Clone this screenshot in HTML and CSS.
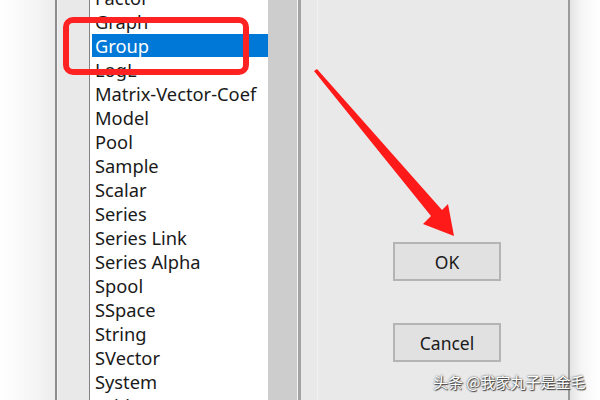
FILE: index.html
```html
<!DOCTYPE html>
<html lang="en">
<head>
    <meta charset="UTF-8">
    <title>Select object type</title>
    <link rel="stylesheet" href="styles.css">
</head>
<body>

<div class="screen">
    <div class="shade-left"></div>

    <div class="dialog">
        <div class="gutter"></div>

        <div class="listbox">
            <div class="list">
                <ul class="items">
                    <li>Factor</li>
                    <li>Graph</li>
                    <li class="selected">Group</li>
                    <li>LogL</li>
                    <li>Matrix-Vector-Coef</li>
                    <li>Model</li>
                    <li>Pool</li>
                    <li>Sample</li>
                    <li>Scalar</li>
                    <li>Series</li>
                    <li>Series Link</li>
                    <li>Series Alpha</li>
                    <li>Spool</li>
                    <li>SSpace</li>
                    <li>String</li>
                    <li>SVector</li>
                    <li>System</li>
                    <li>Table</li>
                </ul>
            </div>
            <div class="scrollbar"></div>
        </div>

        <div class="side">
            <div class="buttons">
                <button class="btn">OK</button>
                <button class="btn">Cancel</button>
            </div>
        </div>
    </div>

    <div class="shade-right"></div>

    <!-- annotation marks drawn on top of the screenshot -->
    <div class="mark-box"></div>
    <svg class="mark-arrow" width="600" height="400" viewBox="0 0 600 400">
        <polygon points="314,71 317,69 442,210 448,204 454,236 423,224 431,216" fill="#ff1a1a"/>
    </svg>

    <div class="watermark">头条 @我家丸子是金毛</div>
</div>

</body>
</html>
```

FILE: styles.css
```css
body {
    margin: 0;
    font-family: "Noto Sans", "Open Sans", sans-serif;
    background-color: #ffffff;
}

.screen {
    position: relative;
    display: flex;
    width: 600px;
    height: 400px;
    overflow: hidden;
}

.shade-left {
    width: 55px;
    background: linear-gradient(to right, #ffffff, #f4f4f4 70%, #ececec);
}

.shade-right {
    flex: 1;
    background: linear-gradient(to right, #e4e4e4, #f6f6f6 40%, #ffffff);
}

.dialog {
    display: flex;
    width: 511px;
    background-color: #e9e9e9;
    border-left: 2px solid #8c8c8c;
    border-right: 2px solid #9a9a9a;
}

.gutter {
    width: 31px;
    border-left: 1px solid #f2f2f2;
}

.listbox {
    display: flex;
    border-left: 1px solid #828282;
    border-right: 3px solid #a3a3a3;
}

.list {
    width: 178px;
    background-color: #ffffff;
    overflow: hidden;
}

.scrollbar {
    width: 29px;
    background-color: #cdcdcd;
    border-right: 1px solid #f4f4f4;
}

.items {
    list-style: none;
    margin: -14px 0 0 0;
    padding: 0;
}

.items li {
    height: 24px;
    line-height: 24px;
    padding-left: 5px;
    font-size: 18.3px;
    color: #1a1a1a;
    white-space: nowrap;
}

.items li.selected {
    height: 23px;
    margin-bottom: 1px;
    line-height: 23px;
    background-color: #0078d7;
    color: #ffffff;
    margin-left: 2px;
    padding-left: 3px;
}

.side {
    flex: 1;
    padding-left: 16px;
}

.buttons {
    height: 100%;
    border-left: 1px solid #f1f1f1;
    display: flex;
    flex-direction: column;
    gap: 42px;
    padding: 242px 0 0 75px;
    box-sizing: border-box;
}

.btn {
    width: 108px;
    height: 39px;
    font-family: "Noto Sans", "Open Sans", sans-serif;
    font-size: 17.5px;
    color: #1a1a1a;
    background-color: #e1e1e1;
    border: 2px solid #b4b4b4;
    padding: 0;
}

.mark-box {
    position: absolute;
    left: 63px;
    top: 17px;
    width: 174px;
    height: 46px;
    border: 6px solid #ff2222;
    border-radius: 10px;
}

.mark-arrow {
    position: absolute;
    left: 0;
    top: 0;
}

.watermark {
    position: absolute;
    left: 433px;
    top: 371px;
    font-family: "Noto Sans CJK SC", sans-serif;
    font-size: 15px;
    color: #ffffff;
    text-shadow: 0 0 2px #333333, 1px 1px 1px #444444;
}
```
